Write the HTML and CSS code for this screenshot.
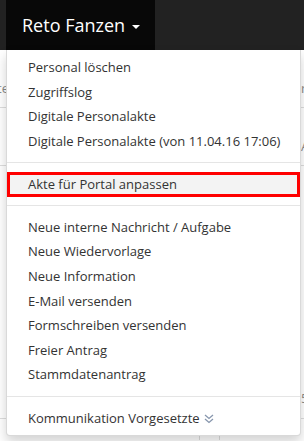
FILE: index.html
```html
<!DOCTYPE html>
<html lang="de">
<head>
    <meta charset="UTF-8">
    <title>Personal</title>
    <link rel="stylesheet" href="styles.css">
</head>
<body>
    <div class="navbar">
        <div class="userMenu">
            <a class="userToggle">Reto Fanzen <span class="caret"></span></a>
            <ul class="dropdownMenu">
                <li><a>Personal löschen</a></li>
                <li><a>Zugriffslog</a></li>
                <li><a>Digitale Personalakte</a></li>
                <li><a>Digitale Personalakte (von 11.04.16 17:06)</a></li>
                <li class="divider"></li>
                <li class="marked"><a>Akte für Portal anpassen</a></li>
                <li class="divider"></li>
                <li><a>Neue interne Nachricht / Aufgabe</a></li>
                <li><a>Neue Wiedervorlage</a></li>
                <li><a>Neue Information</a></li>
                <li><a>E-Mail versenden</a></li>
                <li><a>Formschreiben versenden</a></li>
                <li><a>Freier Antrag</a></li>
                <li><a>Stammdatenantrag</a></li>
                <li class="divider"></li>
                <li><a>Kommunikation Vorgesetzte <svg class="chevrons" width="10" height="10" viewBox="0 0 10 10"><polyline points="1,1 5,4.5 9,1"/><polyline points="1,5 5,8.5 9,5"/></svg></a></li>
            </ul>
        </div>
    </div>
    <div class="page">
        <div class="row head">
            <div class="cell"><span class="cut">Akte</span></div>
            <div class="cell side">r</div>
        </div>
        <div class="row">
            <div class="cell"></div>
            <div class="cell side">A</div>
        </div>
        <div class="row tall">
            <div class="cell"></div>
            <div class="cell side">5</div>
        </div>
        <div class="row foot">
            <div class="cell first"></div>
            <div class="cell mid"></div>
            <div class="cell"></div>
        </div>
    </div>
</body>
</html>
```

FILE: styles.css
```css
* {
    padding: 0;
    margin: 0;
    list-style: none;
    box-sizing: border-box;
}

body {
    font-family: "Open Sans", "Liberation Sans", sans-serif;
    font-size: 13px;
    color: #333;
    background-color: #fff;
    height: 441px;
    overflow: hidden;
}

.navbar {
    height: 50px;
    background-color: #222;
    padding-left: 6px;
    display: flex;
}

.userMenu {
    position: relative;
}

.userToggle {
    display: block;
    height: 50px;
    line-height: 50px;
    padding: 0 15px 0 16px;
    font-size: 18px;
    color: #fff;
    background-color: #080808;
}

.caret {
    display: inline-block;
    width: 0;
    height: 0;
    margin-left: 2px;
    vertical-align: middle;
    border-top: 4px solid #fff;
    border-left: 4px solid transparent;
    border-right: 4px solid transparent;
}

.dropdownMenu {
    position: absolute;
    top: 50px;
    left: 0;
    z-index: 10;
    width: 295px;
    padding: 5px 0;
    background-color: #fff;
    border: 1px solid rgba(0, 0, 0, 0.15);
    border-top: 0;
    border-radius: 0 0 4px 4px;
    box-shadow: 0 6px 12px rgba(0, 0, 0, 0.175);
}

.dropdownMenu li a {
    display: block;
    padding: 3px 20px 3px 21px;
    line-height: 1.42857;
    white-space: nowrap;
    color: #333;
}

.dropdownMenu .divider {
    height: 1px;
    margin: 9px 0;
    background-color: #e5e5e5;
}

.dropdownMenu .marked {
    margin-top: 1px;
    margin-bottom: -1px;
}

.dropdownMenu .marked a {
    background-color: #f3f3f3;
    box-shadow: inset 0 0 0 3px #f00;
}

.chevrons {
    vertical-align: -1px;
    margin-left: 1px;
}

.chevrons polyline {
    fill: none;
    stroke: #8796ad;
    stroke-width: 1.3;
}

.page {
    color: #888;
    font-size: 13px;
    height: 391px;
    overflow: hidden;
}

.row {
    display: grid;
    grid-template-columns: 300px 1fr;
    height: 58px;
    border-bottom: 1px solid #ddd;
}

.row .cell {
    overflow: hidden;
    white-space: nowrap;
    padding-top: 29px;
}

.row .cut {
    margin-left: -18px;
}

.row .side {
    padding-left: 1px;
}

.row.tall {
    height: 253px;
}

.row.tall .cell {
    padding-top: 223px;
}

.row.foot {
    grid-template-columns: 200px 20px 1fr;
    height: 21px;
    border-bottom: 0;
}

.row.foot .cell {
    padding-top: 0;
}

.row.foot .first,
.row.foot .mid {
    border-right: 1px solid #ddd;
}
```
